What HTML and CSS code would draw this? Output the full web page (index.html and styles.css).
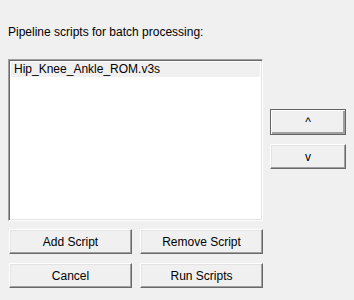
FILE: index.html
```html
<!DOCTYPE html>
<html>
<head>
<meta charset="utf-8">
<link rel="stylesheet" href="styles.css">
</head>
<body>
<div class="dialog">
  <div class="caption">Pipeline scripts for batch processing:</div>
  <div class="main">
    <div class="left">
      <div class="listbox">
        <div class="item selected">Hip_Knee_Ankle_ROM.v3s</div>
      </div>
      <div class="actions">
        <button class="btn">Add Script</button>
        <button class="btn">Remove Script</button>
        <button class="btn">Cancel</button>
        <button class="btn">Run Scripts</button>
      </div>
    </div>
    <div class="right">
      <button class="btn default small">^</button>
      <button class="btn small">v</button>
    </div>
  </div>
</div>
</body>
</html>
```
FILE: styles.css
```css
html, body {
  margin: 0;
  padding: 0;
  background: #f0f0f0;
}
body {
  width: 354px;
  height: 300px;
  overflow: hidden;
  font-family: "Liberation Sans", Arial, sans-serif;
  font-size: 12px;
  color: #000;
}
.dialog {
  padding: 25px 0 0 8px;
}
.caption {
  height: 15px;
  line-height: 15px;
  margin-bottom: 19px;
}
.main {
  display: flex;
}
.left {
  width: 255px;
}
.listbox {
  box-sizing: border-box;
  height: 162px;
  background: #fff;
  border-top: 1px solid #a0a0a0;
  border-left: 1px solid #a0a0a0;
  border-right: 1px solid #fff;
  border-bottom: 1px solid #fff;
  box-shadow: inset 1px 1px 0 #696969, inset -1px -1px 0 #e3e3e3;
  padding: 2px 2px;
}
.item {
  height: 15px;
  line-height: 15px;
  padding-left: 3px;
}
.item.selected {
  background: #f0f0f0;
  color: #000;
}
.actions {
  display: grid;
  grid-template-columns: 123px 123px;
  column-gap: 8px;
  row-gap: 9px;
  margin-top: 8px;
  padding-left: 1px;
}
.btn {
  box-sizing: border-box;
  height: 25px;
  margin: 0;
  padding: 0;
  background: #f0f0f0;
  font-family: "Liberation Sans", Arial, sans-serif;
  font-size: 12px;
  color: #000;
  border-top: 1px solid #fff;
  border-left: 1px solid #fff;
  border-right: 1px solid #696969;
  border-bottom: 1px solid #696969;
  box-shadow: inset -1px -1px 0 #a0a0a0, inset 1px 1px 0 #e3e3e3;
}
.right {
  display: flex;
  flex-direction: column;
  margin-left: 7px;
  padding-top: 50px;
  gap: 9px;
}
.btn.small {
  width: 76px;
}
.btn.default {
  height: 26px;
  border: 1px solid #646464;
  box-shadow: inset 1px 1px 0 #fff, inset -2px -2px 0 #a0a0a0;
}
```
